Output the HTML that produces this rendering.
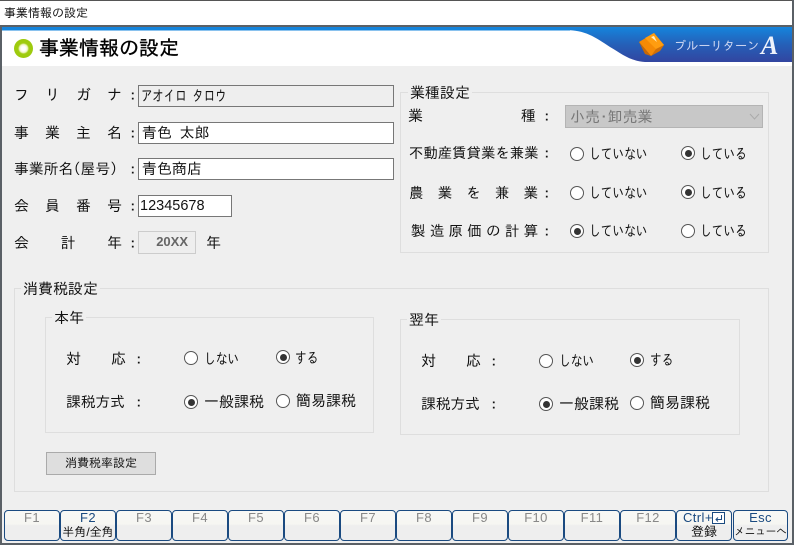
<!DOCTYPE html>
<html lang="ja"><head><meta charset="utf-8"><title>事業情報の設定</title>
<style>
html,body{margin:0;padding:0;background:#efefef}
#w{position:relative;width:794px;height:545px;overflow:hidden;background:#efefef;font-family:"Liberation Sans","IPAGothic","Noto Sans CJK JP",sans-serif;font-size:15px;color:#111}
#w div,#w span.a{position:absolute;box-sizing:border-box}
.j{font-family:"IPAGothic","Noto Sans CJK JP",sans-serif;white-space:nowrap;line-height:16px;height:16px}
.l{display:flex;justify-content:space-between}
#w .l span{position:static}
.in{background:#fff;border:1px solid #777;line-height:19px;padding-left:3px;white-space:nowrap;font-family:"IPAGothic","Noto Sans CJK JP",sans-serif}
.g{border:1px solid #dedede}
.lg{background:#efefef;padding:0 2px}
.r{width:14px;height:14px;border-radius:50%;border:1px solid #555;background:#fff}
.r.c::after{content:"";position:absolute;left:2.5px;top:2.5px;width:7px;height:7px;border-radius:50%;background:#333}
.k{transform:scaleX(.78);transform-origin:0 50%}
.fk{top:510px;height:31px;width:56px;border:1.5px solid #1a4a80;border-radius:4px;background:linear-gradient(#f8f8f5 0,#f6f6f2 45%,#eeeeee 50%,#eeeeee 100%);text-align:center;font-size:13px;line-height:14px;color:#888;font-family:"Liberation Sans",sans-serif}
.fk b{font-weight:normal;display:block;height:14px;letter-spacing:.4px}
.fk i{font-style:normal;display:block;color:#111;font-family:"Liberation Sans","IPAGothic","Noto Sans CJK JP",sans-serif;font-size:12px;line-height:14px;white-space:nowrap}
.on{color:#1a4a80}
</style></head><body><div id="w">
<div style="left:0;top:0;width:794px;height:27px;background:#fff;border-top:1px solid #555;border-bottom:2px solid #5a6066"></div>
<div class="j" style="left:4px;top:5px;font-size:12px">事業情報の設定</div>
<svg style="position:absolute;left:0;top:27px" width="794" height="40" viewBox="0 0 794 40">
<defs><linearGradient id="b" x1="0" y1="0" x2="0" y2="1"><stop offset="0" stop-color="#1584dc"/><stop offset=".5" stop-color="#2560b8"/><stop offset="1" stop-color="#3245a0"/></linearGradient></defs>
<rect width="794" height="39" fill="#fff"/>
<path d="M0 0H794V35H645C630 34 622 27 610 20C595 10 585 3 565 3H0Z" fill="url(#b)"/>
<rect y="0" width="570" height="3.5" fill="#1584dc"/>
<path d="M639 15L654 6L664 18L651 29Z" fill="#f58a05"/>
<path d="M645 11L654 6L664 18L656 22Z" fill="#ff9d10"/>
<path d="M639 15L651 29L645 27Z" fill="#c86804"/>
<path d="M651 29L656 22L664 18L660 24Z" fill="#d07008"/>
<path d="M651 10L654 9L657 15Z" fill="#fff0c8"/>
<text x="674" y="23" font-family="IPAGothic,'Noto Sans CJK JP',sans-serif" font-size="12.2" fill="#cfd8f2">ブルーリターン</text>
<text x="761" y="27" font-family="'Liberation Serif',serif" font-size="26" font-weight="bold" font-style="italic" fill="#eef2fb">A</text>
</svg>
<div style="left:14px;top:39px;width:19px;height:19px;border-radius:50%;background:radial-gradient(circle,#fff 0,#fff 2px,#f0f5c8 4px,#a0cc10 5.5px,#98c808 100%)"></div>
<div class="j" style="left:39px;top:38px;font-size:20px;line-height:20px;height:20px;color:#000;-webkit-text-stroke:.35px #000">事業情報の設定</div>
<div style="left:0;top:27px;width:2px;height:518px;background:#5a6066"></div>
<div style="right:0;top:0;width:2px;height:545px;background:#5a6066"></div>
<div style="left:0;top:543px;width:794px;height:2px;background:#5a6066"></div>

<div class="j l" style="left:14px;top:87px;width:108px"><span>フ</span><span>リ</span><span>ガ</span><span>ナ</span></div><div class="j" style="left:129px;top:87px">:</div>
<div class="j l" style="left:14px;top:125px;width:108px"><span>事</span><span>業</span><span>主</span><span>名</span></div><div class="j" style="left:129px;top:125px">:</div>
<div class="j" style="left:14px;top:161px;font-size:14.8px">事業所名(屋号)</div><div class="j" style="left:129px;top:161px">:</div>
<div class="j l" style="left:14px;top:198px;width:108px"><span>会</span><span>員</span><span>番</span><span>号</span></div><div class="j" style="left:129px;top:198px">:</div>
<div class="j l" style="left:14px;top:235px;width:108px"><span>会</span><span>計</span><span>年</span></div><div class="j" style="left:129px;top:235px">:</div>

<div class="in" style="left:138px;top:85px;width:256px;height:22px;background:#eee"><span style="display:inline-block;transform:scaleX(.76);transform-origin:0 50%;margin-left:-1px">アオイロ タロウ</span></div>
<div class="in" style="left:138px;top:122px;width:256px;height:22px">青色 太郎</div>
<div class="in" style="left:138px;top:158px;width:256px;height:22px">青色商店</div>
<div class="in" style="left:138px;top:195px;width:94px;height:22px;font-family:'Liberation Sans',sans-serif;font-size:14.5px;line-height:21px;padding-left:1px">12345678</div>
<div style="left:138px;top:231px;width:58px;height:23px;border:1px solid #ccc;background:#eee;color:#666;font-weight:bold;font-size:13px;line-height:20px;text-align:right;padding-right:7px;font-family:'Liberation Sans',sans-serif">20XX</div>
<div class="j" style="left:206px;top:235px">年</div>

<div class="g" style="left:400px;top:92px;width:369px;height:161px"></div>
<div class="j lg" style="left:408px;top:85px">業種設定</div>
<div class="j" style="left:408px;top:108px">業</div><div class="j" style="left:521px;top:108px">種</div><div class="j" style="left:543px;top:108px">:</div>
<div style="left:565px;top:105px;width:198px;height:23px;background:#c8c8c8;border:1px solid #b4b4b4;color:#777;line-height:21px;padding-left:4px;font-family:'IPAGothic','Noto Sans CJK JP',sans-serif">小売･卸売業</div>
<svg style="position:absolute;left:749px;top:113px" width="12" height="8"><path d="M1 1L5.5 6L10 1" fill="none" stroke="#aaa" stroke-width="1"/></svg>
<div class="j" style="left:409px;top:145px;font-size:14.4px">不動産賃貸業を兼業</div><div class="j" style="left:543px;top:145px">:</div>
<div class="j l" style="left:409px;top:185px;width:129px;font-size:14.5px"><span>農</span><span>業</span><span>を</span><span>兼</span><span>業</span></div><div class="j" style="left:543px;top:185px">:</div>
<div class="j l" style="left:411px;top:223px;width:127px;font-size:14.5px"><span>製</span><span>造</span><span>原</span><span>価</span><span>の</span><span>計</span><span>算</span></div><div class="j" style="left:543px;top:223px">:</div>

<div class="r" style="left:570px;top:147px"></div><div class="j k" style="left:589px;top:146px">していない</div>
<div class="r c" style="left:681px;top:146px"></div><div class="j k" style="left:700px;top:146px">している</div>
<div class="r" style="left:570px;top:186px"></div><div class="j k" style="left:589px;top:185px">していない</div>
<div class="r c" style="left:681px;top:185px"></div><div class="j k" style="left:700px;top:185px">している</div>
<div class="r c" style="left:570px;top:224px"></div><div class="j k" style="left:589px;top:223px">していない</div>
<div class="r" style="left:681px;top:224px"></div><div class="j k" style="left:700px;top:223px">している</div>

<div class="g" style="left:14px;top:288px;width:755px;height:204px"></div>
<div class="j lg" style="left:21px;top:281px">消費税設定</div>

<div class="g" style="left:45px;top:317px;width:329px;height:116px"></div>
<div class="j lg" style="left:52px;top:310px">本年</div>
<div class="j" style="left:66px;top:351px">対</div><div class="j" style="left:111px;top:351px">応</div><div class="j" style="left:135px;top:351px">:</div>
<div class="j" style="left:66px;top:394px;font-size:14.7px">課税方式</div><div class="j" style="left:135px;top:394px">:</div>
<div class="r" style="left:184px;top:351px"></div><div class="j k" style="left:204px;top:351px">しない</div>
<div class="r c" style="left:276px;top:350px"></div><div class="j k" style="left:295px;top:350px">する</div>
<div class="r c" style="left:184px;top:395px"></div><div class="j" style="left:204px;top:394px">一般課税</div>
<div class="r" style="left:276px;top:394px"></div><div class="j" style="left:296px;top:393px">簡易課税</div>

<div class="g" style="left:400px;top:319px;width:340px;height:116px"></div>
<div class="j lg" style="left:407px;top:312px">翌年</div>
<div class="j" style="left:421px;top:353px">対</div><div class="j" style="left:466px;top:353px">応</div><div class="j" style="left:490px;top:353px">:</div>
<div class="j" style="left:421px;top:396px;font-size:14.7px">課税方式</div><div class="j" style="left:490px;top:396px">:</div>
<div class="r" style="left:539px;top:354px"></div><div class="j k" style="left:559px;top:353px">しない</div>
<div class="r c" style="left:630px;top:353px"></div><div class="j k" style="left:650px;top:352px">する</div>
<div class="r c" style="left:539px;top:397px"></div><div class="j" style="left:559px;top:396px">一般課税</div>
<div class="r" style="left:630px;top:396px"></div><div class="j" style="left:650px;top:395px">簡易課税</div>

<div style="left:46px;top:452px;width:110px;height:23px;background:#dedede;border:1px solid #aaa;text-align:center;font-size:12px;line-height:21px;font-family:'IPAGothic','Noto Sans CJK JP',sans-serif">消費税率設定</div>

<div class="fk" style="left:4px"><b>F1</b></div>
<div class="fk" style="left:60px"><b class="on">F2</b><i>半角/全角</i></div>
<div class="fk" style="left:116px"><b>F3</b></div>
<div class="fk" style="left:172px"><b>F4</b></div>
<div class="fk" style="left:228px"><b>F5</b></div>
<div class="fk" style="left:284px"><b>F6</b></div>
<div class="fk" style="left:340px"><b>F7</b></div>
<div class="fk" style="left:396px"><b>F8</b></div>
<div class="fk" style="left:452px"><b>F9</b></div>
<div class="fk" style="left:508px"><b>F10</b></div>
<div class="fk" style="left:564px"><b>F11</b></div>
<div class="fk" style="left:620px"><b>F12</b></div>
<div class="fk" style="left:676px;text-align:left;padding-left:6px"><b class="on">Ctrl+</b><i style="padding-left:8px;font-size:13px">登録</i></div>
<svg style="position:absolute;left:712px;top:512px" width="14" height="13"><path d="M0.5 0.5H12.5V11.5H0.5Z" fill="#fff" stroke="#1a4a80"/><path d="M9.5 3V7.5H4M6 5.5L4 7.5L6 9.5" fill="none" stroke="#1a4a80"/></svg>
<div class="fk" style="left:733px;width:55px"><b class="on">Esc</b><i style="font-size:10.5px">メニューへ</i></div>
</div></body></html>
